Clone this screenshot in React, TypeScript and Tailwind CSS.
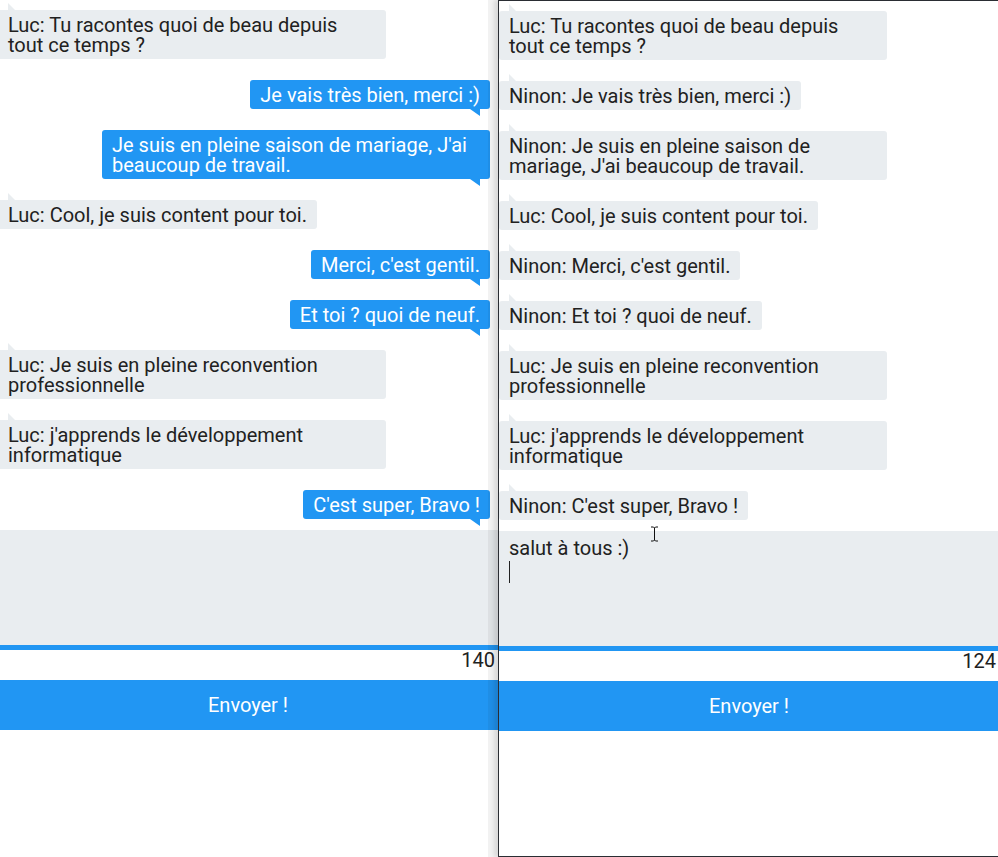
import React from "react"

type Msg = { from: "luc" | "ninon"; text: string }

const messages: Msg[] = [
  { from: "luc", text: "Tu racontes quoi de beau depuis tout ce temps ?" },
  { from: "ninon", text: "Je vais très bien, merci :)" },
  { from: "ninon", text: "Je suis en pleine saison de mariage, J'ai beaucoup de travail." },
  { from: "luc", text: "Cool, je suis content pour toi." },
  { from: "ninon", text: "Merci, c'est gentil." },
  { from: "ninon", text: "Et toi ? quoi de neuf." },
  { from: "luc", text: "Je suis en pleine reconvention professionnelle" },
  { from: "luc", text: "j'apprends le développement informatique" },
  { from: "ninon", text: "C'est super, Bravo !" },
]

const names = { luc: "Luc", ninon: "Ninon" }

function Received({ text }: { text: string }) {
  return (
    <div className="relative self-start max-w-[388px] rounded-[3px] bg-[#e9edf0] px-[10px] pt-[5px] pb-[4px] text-[#212121]">
      {/* tail */}
      <div className="absolute left-[10px] -top-[7px] h-0 w-0 border-b-[7px] border-r-[7px] border-b-[#e9edf0] border-r-transparent"></div>
      {text}
    </div>
  )
}

function Sent({ text }: { text: string }) {
  return (
    <div className="relative self-end mr-[8px] max-w-[388px] rounded-[3px] bg-[#2196f3] px-[10px] pt-[5px] pb-[4px] text-white">
      {text}
      <div className="absolute right-[10px] -bottom-[7px] h-0 w-0 border-t-[7px] border-l-[10px] border-t-[#2196f3] border-l-transparent"></div>
    </div>
  )
}

function Chat({ me, count, draft }: { me: "luc" | "ninon" | null; count: number; draft?: string }) {
  return (
    <div className="flex flex-col">
      <div className="h-[530px] pt-[10px] flex flex-col gap-[21px] overflow-hidden">
        {messages.map((m, i) =>
          m.from === me ? (
            <Sent key={i} text={m.text} />
          ) : (
            <Received key={i} text={`${names[m.from]}: ${m.text}`} />
          )
        )}
      </div>

      <div className="relative">
        <textarea
          className="block w-full h-[120px] resize-none bg-[#e9edf0] border-b-[5px] border-[#2196f3] px-[10px] pt-[6px] text-[20px] leading-[22px] text-[#212121] outline-none font-[Roboto,sans-serif]"
          defaultValue={draft}
        />
        {draft && (
          <>
            {/* fake caret on the second line */}
            <div className="absolute left-[10px] top-[30px] h-[22px] w-px bg-[#222]"></div>
            {/* mouse I-beam */}
            <svg className="absolute left-[151px] -top-[5px]" width="9" height="16" viewBox="0 0 9 16">
              <path d="M1 1h2.5l1 1 1-1H8M4.5 2v12M1 15h2.5l1-1 1 1H8" fill="none" stroke="#111" strokeWidth="1" />
            </svg>
          </>
        )}
      </div>

      <div className="h-[30px] pr-[3px] text-right text-[20px] leading-5 text-[#212121]">{count}</div>

      <button className="h-[50px] w-full bg-[#2196f3] text-[20px] text-white">Envoyer !</button>
    </div>
  )
}

export default function App() {
  return (
    <div className="flex h-[857px] w-[998px] overflow-hidden bg-white font-[Roboto,sans-serif] text-[20px] leading-5">
      <div className="-ml-[2px] w-[500px] shrink-0">
        <Chat me="ninon" count={140} />
      </div>
      <div className="relative z-10 h-[857px] w-[502px] shrink-0 border border-[#2a2d33] bg-white shadow-[-10px_0_0_rgba(0,0,0,0.05),-4px_0_4px_rgba(0,0,0,0.1)]">
        <Chat me={null} count={124} draft={"salut à tous :)\n"} />
      </div>
    </div>
  )
}
